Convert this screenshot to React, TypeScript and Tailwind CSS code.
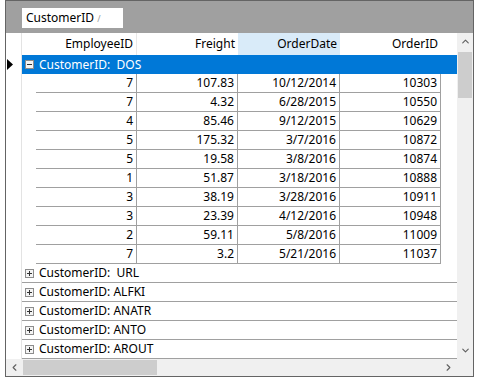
import { ChevronUp, ChevronDown, ChevronLeft, ChevronRight } from 'lucide-react';

type Order = {
  employee: number;
  freight: string;
  date: string;
  id: number;
};

const orders: Order[] = [
  { employee: 7, freight: '107.83', date: '10/12/2014', id: 10303 },
  { employee: 7, freight: '4.32', date: '6/28/2015', id: 10550 },
  { employee: 4, freight: '85.46', date: '9/12/2015', id: 10629 },
  { employee: 5, freight: '175.32', date: '3/7/2016', id: 10872 },
  { employee: 5, freight: '19.58', date: '3/8/2016', id: 10874 },
  { employee: 1, freight: '51.87', date: '3/18/2016', id: 10888 },
  { employee: 3, freight: '38.19', date: '3/28/2016', id: 10911 },
  { employee: 3, freight: '23.39', date: '4/12/2016', id: 10948 },
  { employee: 2, freight: '59.11', date: '5/8/2016', id: 11009 },
  { employee: 7, freight: '3.2', date: '5/21/2016', id: 11037 },
];

const collapsed = ['CustomerID:  URL', 'CustomerID: ALFKI', 'CustomerID: ANATR', 'CustomerID: ANTO', 'CustomerID: AROUT'];

function Expander({ open }: { open: boolean }) {
  return (
    <span className="flex h-[9px] w-[9px] items-center justify-center border border-[#8c8c8c] bg-[#f4f4f4]">
      <svg width="7" height="7" viewBox="0 0 7 7">
        <rect x="1" y="3" width="5" height="1" fill="#333" />
        {!open && <rect x="3" y="1" width="1" height="5" fill="#333" />}
      </svg>
    </span>
  );
}

function Cell({ children, className = '' }: { children: React.ReactNode; className?: string }) {
  return (
    <div className={'flex items-center justify-end border-r border-b border-[#a0a0a0] pr-[3px] ' + className}>
      {children}
    </div>
  );
}

export default function App() {
  return (
    <div
      className="h-[383px] w-[481px] bg-white text-[12px] text-black"
      style={{ fontFamily: '"Noto Sans", "Segoe UI", sans-serif' }}
    >
      <div className="ml-[5px] flex h-[377px] w-[469px] flex-col border border-[#646464]">
        {/* group-by drop area */}
        <div className="h-[32px] shrink-0 bg-[#a0a0a0] pt-[7px] pl-[16px]">
          <div className="flex h-[20px] w-[101px] items-center bg-white pl-[4px] leading-none">
            <span>CustomerID</span>
            <span className="ml-[3px] text-[9px] text-[#9a9a9a]">/</span>
          </div>
        </div>

        <div className="flex min-h-0 flex-1">
          <div className="flex w-[451px] flex-col">
            {/* column headers */}
            <div className="flex h-[22px] shrink-0 bg-white">
              <div className="w-[16px] border-r border-[#e3e3e3]" />
              <div className="w-[14px]" />
              <div className="flex w-[101px] items-center justify-end border-r border-[#e8e8e8] pr-[3px]">EmployeeID</div>
              <div className="flex w-[101px] items-center justify-end pr-[3px]">Freight</div>
              <div className="flex w-[102px] items-center justify-end bg-[#d9ebf9] pr-[3px]">OrderDate</div>
              <div className="flex w-[101px] items-center justify-end pr-[3px]">OrderID</div>
            </div>

            {/* expanded group */}
            <div className="flex h-[19px] shrink-0">
              <div className="relative w-[16px] border-r border-[#e3e3e3]">
                <svg className="absolute top-[4px] left-[1px]" width="7" height="11" viewBox="0 0 7 11">
                  <path d="M0 0 L6 5.5 L0 11 Z" fill="#000" />
                </svg>
              </div>
              <div className="flex flex-1 items-center bg-[#0078d7] pl-[3px] text-white">
                <Expander open />
                <span className="ml-[5px]">CustomerID:&nbsp; DOS</span>
              </div>
            </div>

            {orders.map((o) => (
              <div key={o.id} className="flex h-[19px] shrink-0">
                <div className="w-[16px] border-r border-[#e3e3e3]" />
                <div className="w-[14px]" />
                <Cell className="w-[101px]">{o.employee}</Cell>
                <Cell className="w-[101px]">{o.freight}</Cell>
                <Cell className="w-[102px]">{o.date}</Cell>
                <Cell className="w-[101px]">{o.id}</Cell>
              </div>
            ))}

            {collapsed.map((g) => (
              <div key={g} className="flex h-[19px] shrink-0">
                <div className="w-[16px] border-r border-[#e3e3e3]" />
                <div className="flex flex-1 items-center border-b border-[#a0a0a0] pl-[3px]">
                  <Expander open={false} />
                  <span className="ml-[5px] whitespace-pre">{g}</span>
                </div>
              </div>
            ))}
            <div className="flex-1">
              <div className="h-full w-[16px] border-r border-[#e3e3e3]" />
            </div>
          </div>

          {/* vertical scrollbar */}
          <div className="flex w-[16px] flex-col bg-[#f0f0f0]">
            <div className="flex h-[17px] items-center justify-center text-[#606060]">
              <ChevronUp size={11} strokeWidth={2.5} />
            </div>
            <div className="flex-1 px-[1px]">
              <div className="mt-[2px] h-[46px] bg-[#cdcdcd]" />
            </div>
            <div className="flex h-[17px] items-center justify-center text-[#606060]">
              <ChevronDown size={11} strokeWidth={2.5} />
            </div>
          </div>
        </div>

        {/* horizontal scrollbar */}
        <div className="flex h-[17px] shrink-0 items-center bg-[#f0f0f0]">
          <div className="flex w-[17px] justify-center text-[#606060]">
            <ChevronLeft size={11} strokeWidth={2.5} />
          </div>
          <div className="h-[15px] w-[134px] bg-[#cdcdcd]" />
          <div className="flex-1" />
          <div className="flex w-[17px] justify-center text-[#606060]">
            <ChevronRight size={11} strokeWidth={2.5} />
          </div>
          <div className="w-[16px]" />
        </div>
      </div>
    </div>
  );
}
